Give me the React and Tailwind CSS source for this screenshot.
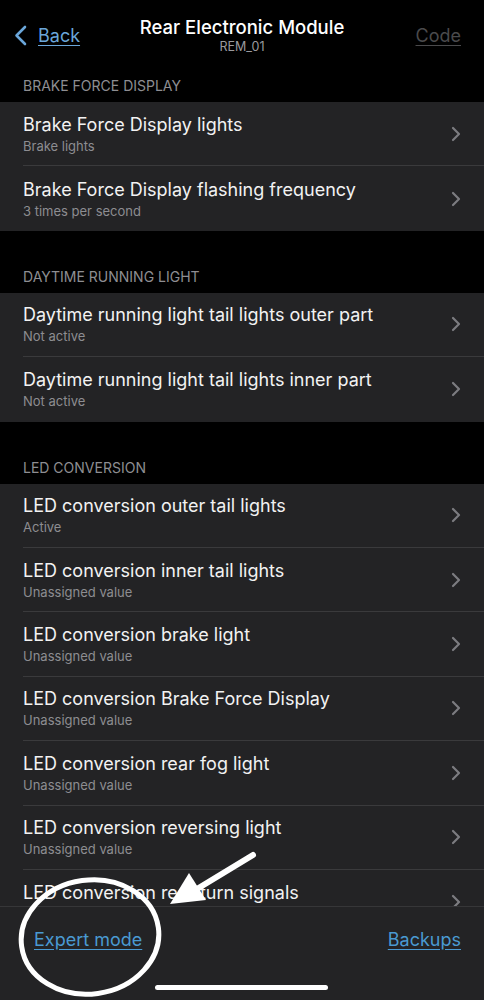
import React from "react";

const sections = [
  {
    title: "BRAKE FORCE DISPLAY",
    rows: [
      ["Brake Force Display lights", "Brake lights"],
      ["Brake Force Display flashing frequency", "3 times per second"],
    ],
  },
  {
    title: "DAYTIME RUNNING LIGHT",
    rows: [
      ["Daytime running light tail lights outer part", "Not active"],
      ["Daytime running light tail lights inner part", "Not active"],
    ],
  },
  {
    title: "LED CONVERSION",
    rows: [
      ["LED conversion outer tail lights", "Active"],
      ["LED conversion inner tail lights", "Unassigned value"],
      ["LED conversion brake light", "Unassigned value"],
      ["LED conversion Brake Force Display", "Unassigned value"],
      ["LED conversion rear fog light", "Unassigned value"],
      ["LED conversion reversing light", "Unassigned value"],
      ["LED conversion rear turn signals", "Unassigned value"],
    ],
  },
];

function Chevron() {
  return (
    <svg width="10" height="16" viewBox="0 0 10 16" className="shrink-0">
      <path d="M2 2 L8 8 L2 14" fill="none" stroke="#7c7c80" strokeWidth="2.2" strokeLinecap="round" strokeLinejoin="round" />
    </svg>
  );
}

function Row({ title, sub, last }) {
  return (
    <div className="flex h-[64.4px] items-center pl-[23px]">
      <div className={"flex h-full flex-1 items-center pr-[23px] " + (last ? "" : "border-b border-[#3a3a3c]")}>
        <div className="flex-1">
          <div className="text-[18px] leading-[22px] text-[#f2f2f2]">{title}</div>
          <div className="mt-[2px] text-[13px] leading-[16px] text-[#8d8d91]">{sub}</div>
        </div>
        <Chevron />
      </div>
    </div>
  );
}

export default function App() {
  return (
    <div className="relative flex h-screen w-full flex-col overflow-hidden bg-black font-['Inter',sans-serif]">
      {/* nav bar */}
      <div className="flex h-[65px] shrink-0 items-center px-[14px]">
        <div className="flex w-[100px] items-center gap-[11px] pt-[5px] text-[#6aa6da]">
          <svg width="13" height="21" viewBox="0 0 13 21">
            <path d="M11 2 L2.5 10.5 L11 19" fill="none" stroke="#6aa6da" strokeWidth="2.6" strokeLinecap="round" strokeLinejoin="round" />
          </svg>
          <span className="text-[18px] underline underline-offset-[3px]">Back</span>
        </div>
        <div className="flex flex-1 flex-col items-center pt-[4px]">
          <span className="text-[18.5px] font-medium leading-[24px] text-white">Rear Electronic Module</span>
          <span className="text-[12.5px] leading-[16px] text-[#9a9a9e]">REM_01</span>
        </div>
        <div className="flex w-[100px] justify-end pt-[5px] pr-[9px]">
          <span className="text-[18px] text-[#4a4a4c] underline underline-offset-[3px]">Code</span>
        </div>
      </div>

      {/* list */}
      <div className="flex-1 overflow-hidden">
        {sections.map((s, i) => (
          <div key={s.title} className={i === 0 ? "" : "mt-[25px]"}>
            <div className="flex h-[37px] items-end pb-[6px] pl-[23px] text-[14px] text-[#8e8e92]">{s.title}</div>
            <div className="bg-[#232325]">
              {s.rows.map((r, j) => (
                <Row key={r[0]} title={r[0]} sub={r[1]} last={j === s.rows.length - 1} />
              ))}
            </div>
          </div>
        ))}
      </div>

      {/* bottom toolbar */}
      <div className="relative h-[94px] shrink-0 border-t border-[#363638] bg-[#232325]">
        <div className="flex items-center justify-between px-[23px] pt-[19px] pl-[34px]">
          <span className="text-[18px] text-[#4a9ad2] underline underline-offset-[3px]">Expert mode</span>
          <span className="text-[18px] text-[#4a9ad2] underline underline-offset-[3px]">Backups</span>
        </div>
        <div className="absolute bottom-[10px] left-[155px] h-[5px] w-[173px] rounded-full bg-white" />
      </div>

      {/* annotation overlay */}
      <svg className="pointer-events-none absolute left-0 top-0" width="484" height="1000" viewBox="0 0 484 1000">
        <ellipse cx="90" cy="937" rx="69" ry="57" fill="none" stroke="white" strokeWidth="5" transform="rotate(-8 90 937)" />
        <line x1="253" y1="855" x2="192" y2="892" stroke="white" strokeWidth="6" strokeLinecap="round" />
        <polygon points="170,904 189,873 206,900" fill="white" />
      </svg>
    </div>
  );
}
